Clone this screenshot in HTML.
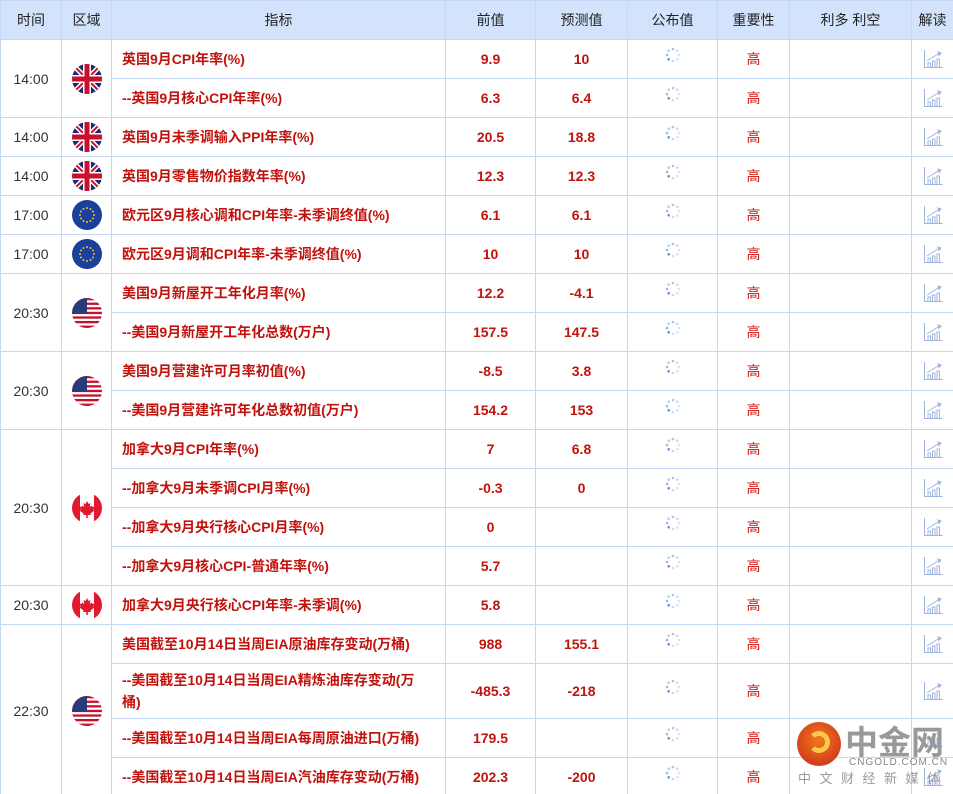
<!DOCTYPE html>
<html><head><meta charset="utf-8">
<style>
html,body{margin:0;padding:0;background:#fff;width:953px;height:794px;overflow:hidden;position:relative}
table{border-collapse:collapse;table-layout:fixed;position:absolute;left:0;top:0;width:953px;font-family:"Liberation Sans","Noto Sans CJK SC",sans-serif}
td,th{border:1px solid #c5d7f3;padding:0;text-align:center;vertical-align:middle}
th{background:#d3e3fb;color:#222;font-weight:normal;font-size:14px;height:38px}
td{height:38px;font-size:14px}
td.t{color:#333;font-size:14px}
td.n{color:#c1130d;font-weight:bold;text-align:left;padding-left:10px;font-size:14px}
td.v{color:#c1130d;font-weight:bold;font-size:14px}
td.h{color:#d4120c;font-size:14px}
.f{width:30px;height:30px;display:block;margin:0 auto}
.sp{width:16px;height:16px;display:block;margin:0 auto;position:relative;top:-4px}
.ch{width:20px;height:20px;display:block;margin:0 auto}
.logo{position:absolute;left:0;top:0;width:953px;height:794px;pointer-events:none}
.logo div{position:absolute;white-space:nowrap}
</style></head><body>
<svg width="0" height="0" style="position:absolute">
<defs>
<clipPath id="c"><circle cx="15" cy="15" r="15"/></clipPath>
<g id="uk" clip-path="url(#c)"><rect width="30" height="30" fill="#1d2a6e"/><path d="M0 0L30 30M30 0L0 30" stroke="#fff" stroke-width="5"/><path d="M0 0L30 30M30 0L0 30" stroke="#c8102e" stroke-width="2"/><rect x="11" y="0" width="8" height="30" fill="#fff"/><rect x="0" y="11" width="30" height="8" fill="#fff"/><rect x="12.5" y="0" width="5" height="30" fill="#c8102e"/><rect x="0" y="12.5" width="30" height="5" fill="#c8102e"/></g>
<g id="eu" clip-path="url(#c)"><rect width="30" height="30" fill="#1b3f9b"/><g fill="#e3c13a"><circle cx="15" cy="8" r="1"/><circle cx="18.5" cy="9" r="1"/><circle cx="21" cy="11.5" r="1"/><circle cx="22" cy="15" r="1"/><circle cx="21" cy="18.5" r="1"/><circle cx="18.5" cy="21" r="1"/><circle cx="15" cy="22" r="1"/><circle cx="11.5" cy="21" r="1"/><circle cx="9" cy="18.5" r="1"/><circle cx="8" cy="15" r="1"/><circle cx="9" cy="11.5" r="1"/><circle cx="11.5" cy="9" r="1"/></g></g>
<g id="us" clip-path="url(#c)"><rect width="30" height="30" fill="#fff"/><g fill="#c8102e"><rect y="0" width="30" height="2.3"/><rect y="4.6" width="30" height="2.3"/><rect y="9.2" width="30" height="2.3"/><rect y="13.8" width="30" height="2.3"/><rect y="18.4" width="30" height="2.3"/><rect y="23" width="30" height="2.3"/><rect y="27.6" width="30" height="2.4"/></g><rect width="15" height="16" fill="#2a3b7a"/></g>
<g id="ca" clip-path="url(#c)"><rect width="30" height="30" fill="#fff"/><rect width="8" height="30" fill="#e1192e"/><rect x="22" width="8" height="30" fill="#e1192e"/><path d="M15 8l1.5 3 2-1-0.8 4 2-1.5 0.8 1.5 2-0.5-1 3 1 1-4 3 0.3 1.5h-3v3h-1.6v-3h-3l0.3-1.5-4-3 1-1-1-3 2 0.5 0.8-1.5 2 1.5-0.8-4 2 1z" fill="#e1192e"/></g>
<g id="sp" fill="#a9c4ea"><circle cx="8" cy="2" r="1.3"/><circle cx="12.3" cy="3.7" r="1.3" fill="#c9daf3"/><circle cx="14" cy="8" r="1.3" fill="#d6e3f6"/><circle cx="12.3" cy="12.3" r="1.3" fill="#d6e3f6"/><circle cx="8" cy="14" r="1.3" fill="#c9daf3"/><circle cx="3.7" cy="12.3" r="1.3" fill="#5d8fd6"/><circle cx="2" cy="8" r="1.3" fill="#9ab8e6"/><circle cx="3.7" cy="3.7" r="1.3" fill="#b7cdee"/></g>
<g id="chr" fill="none" stroke="#9fb4dc" stroke-width="1"><path d="M1.5 1v17.5h18"/><path d="M5 18v-4h2.5v4M9.5 18v-6h2.5v6M14 18v-8h2.5v8"/><path d="M4 12l11-7"/><path d="M15 3l3 1-2 2.5z" fill="#9fb4dc"/></g>
</defs></svg>
<table>
<colgroup><col style="width:61px"><col style="width:50px"><col style="width:334px"><col style="width:90px"><col style="width:92px"><col style="width:90px"><col style="width:72px"><col style="width:122px"><col style="width:42px"></colgroup>
<tr><th>时间</th><th>区域</th><th>指标</th><th>前值</th><th>预测值</th><th>公布值</th><th>重要性</th><th>利多 利空</th><th>解读</th></tr>
<tr><td class="t" rowspan="2">14:00</td><td rowspan="2"><svg class="f"><use href="#uk"/></svg></td><td class="n">英国9月CPI年率(%)</td><td class="v">9.9</td><td class="v">10</td><td><svg class="sp"><use href="#sp"/></svg></td><td class="h">高</td><td></td><td><svg class="ch"><use href="#chr"/></svg></td></tr>
<tr><td class="n">--英国9月核心CPI年率(%)</td><td class="v">6.3</td><td class="v">6.4</td><td><svg class="sp"><use href="#sp"/></svg></td><td class="h">高</td><td></td><td><svg class="ch"><use href="#chr"/></svg></td></tr>
<tr><td class="t">14:00</td><td><svg class="f"><use href="#uk"/></svg></td><td class="n">英国9月未季调输入PPI年率(%)</td><td class="v">20.5</td><td class="v">18.8</td><td><svg class="sp"><use href="#sp"/></svg></td><td class="h">高</td><td></td><td><svg class="ch"><use href="#chr"/></svg></td></tr>
<tr><td class="t">14:00</td><td><svg class="f"><use href="#uk"/></svg></td><td class="n">英国9月零售物价指数年率(%)</td><td class="v">12.3</td><td class="v">12.3</td><td><svg class="sp"><use href="#sp"/></svg></td><td class="h">高</td><td></td><td><svg class="ch"><use href="#chr"/></svg></td></tr>
<tr><td class="t">17:00</td><td><svg class="f"><use href="#eu"/></svg></td><td class="n">欧元区9月核心调和CPI年率-未季调终值(%)</td><td class="v">6.1</td><td class="v">6.1</td><td><svg class="sp"><use href="#sp"/></svg></td><td class="h">高</td><td></td><td><svg class="ch"><use href="#chr"/></svg></td></tr>
<tr><td class="t">17:00</td><td><svg class="f"><use href="#eu"/></svg></td><td class="n">欧元区9月调和CPI年率-未季调终值(%)</td><td class="v">10</td><td class="v">10</td><td><svg class="sp"><use href="#sp"/></svg></td><td class="h">高</td><td></td><td><svg class="ch"><use href="#chr"/></svg></td></tr>
<tr><td class="t" rowspan="2">20:30</td><td rowspan="2"><svg class="f"><use href="#us"/></svg></td><td class="n">美国9月新屋开工年化月率(%)</td><td class="v">12.2</td><td class="v">-4.1</td><td><svg class="sp"><use href="#sp"/></svg></td><td class="h">高</td><td></td><td><svg class="ch"><use href="#chr"/></svg></td></tr>
<tr><td class="n">--美国9月新屋开工年化总数(万户)</td><td class="v">157.5</td><td class="v">147.5</td><td><svg class="sp"><use href="#sp"/></svg></td><td class="h">高</td><td></td><td><svg class="ch"><use href="#chr"/></svg></td></tr>
<tr><td class="t" rowspan="2">20:30</td><td rowspan="2"><svg class="f"><use href="#us"/></svg></td><td class="n">美国9月营建许可月率初值(%)</td><td class="v">-8.5</td><td class="v">3.8</td><td><svg class="sp"><use href="#sp"/></svg></td><td class="h">高</td><td></td><td><svg class="ch"><use href="#chr"/></svg></td></tr>
<tr><td class="n">--美国9月营建许可年化总数初值(万户)</td><td class="v">154.2</td><td class="v">153</td><td><svg class="sp"><use href="#sp"/></svg></td><td class="h">高</td><td></td><td><svg class="ch"><use href="#chr"/></svg></td></tr>
<tr><td class="t" rowspan="4">20:30</td><td rowspan="4"><svg class="f"><use href="#ca"/></svg></td><td class="n">加拿大9月CPI年率(%)</td><td class="v">7</td><td class="v">6.8</td><td><svg class="sp"><use href="#sp"/></svg></td><td class="h">高</td><td></td><td><svg class="ch"><use href="#chr"/></svg></td></tr>
<tr><td class="n">--加拿大9月未季调CPI月率(%)</td><td class="v">-0.3</td><td class="v">0</td><td><svg class="sp"><use href="#sp"/></svg></td><td class="h">高</td><td></td><td><svg class="ch"><use href="#chr"/></svg></td></tr>
<tr><td class="n">--加拿大9月央行核心CPI月率(%)</td><td class="v">0</td><td class="v"></td><td><svg class="sp"><use href="#sp"/></svg></td><td class="h">高</td><td></td><td><svg class="ch"><use href="#chr"/></svg></td></tr>
<tr><td class="n">--加拿大9月核心CPI-普通年率(%)</td><td class="v">5.7</td><td class="v"></td><td><svg class="sp"><use href="#sp"/></svg></td><td class="h">高</td><td></td><td><svg class="ch"><use href="#chr"/></svg></td></tr>
<tr><td class="t">20:30</td><td><svg class="f"><use href="#ca"/></svg></td><td class="n">加拿大9月央行核心CPI年率-未季调(%)</td><td class="v">5.8</td><td class="v"></td><td><svg class="sp"><use href="#sp"/></svg></td><td class="h">高</td><td></td><td><svg class="ch"><use href="#chr"/></svg></td></tr>
<tr><td class="t" rowspan="4">22:30</td><td rowspan="4"><svg class="f"><use href="#us"/></svg></td><td class="n">美国截至10月14日当周EIA原油库存变动(万桶)</td><td class="v">988</td><td class="v">155.1</td><td><svg class="sp"><use href="#sp"/></svg></td><td class="h">高</td><td></td><td><svg class="ch"><use href="#chr"/></svg></td></tr>
<tr><td class="n" style="height:54px;line-height:22px">--美国截至10月14日当周EIA精炼油库存变动(万<br>桶)</td><td class="v">-485.3</td><td class="v">-218</td><td><svg class="sp"><use href="#sp"/></svg></td><td class="h">高</td><td></td><td><svg class="ch"><use href="#chr"/></svg></td></tr>
<tr><td class="n">--美国截至10月14日当周EIA每周原油进口(万桶)</td><td class="v">179.5</td><td class="v"></td><td><svg class="sp"><use href="#sp"/></svg></td><td class="h">高</td><td></td><td><svg class="ch"><use href="#chr"/></svg></td></tr>
<tr><td class="n">--美国截至10月14日当周EIA汽油库存变动(万桶)</td><td class="v">202.3</td><td class="v">-200</td><td><svg class="sp"><use href="#sp"/></svg></td><td class="h">高</td><td></td><td><svg class="ch"><use href="#chr"/></svg></td></tr>
</table>
<div class="logo">
<div style="left:797px;top:722px;width:44px;height:44px;border-radius:50%;background:radial-gradient(circle at 50% 40%,#f07a1a,#c8261c)"></div>
<div style="left:808px;top:731px;width:22px;height:22px;border-radius:50%;border:5px solid #f8c94a;border-left-color:transparent;box-sizing:border-box"></div>
<div style="left:845px;top:718px;font:bold 33px/44px 'Noto Sans CJK SC',sans-serif;color:#999;letter-spacing:0px">中金网</div>
<div style="left:849px;top:757px;font:10px/12px 'Liberation Sans',sans-serif;color:#888;letter-spacing:1px">CNGOLD.COM.CN</div>
<div style="left:798px;top:769px;font:13px/18px 'Noto Sans CJK SC',sans-serif;color:#999;letter-spacing:8.5px">中文财经新媒体</div>
</div>
</body></html>
